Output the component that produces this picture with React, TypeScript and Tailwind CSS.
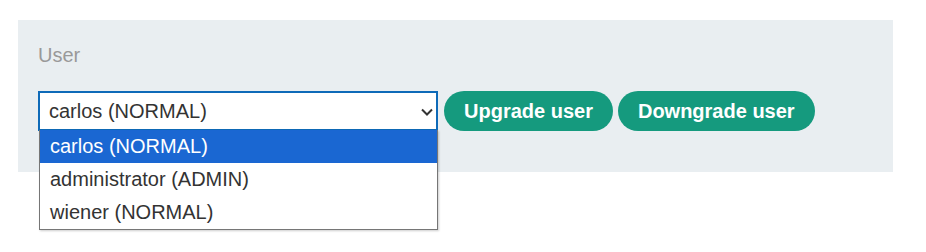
import React from "react";

export default function App() {
  const font = { fontFamily: '"Liberation Sans", Arial, sans-serif' };
  return (
    <div className="w-[926px] h-[252px] bg-white pt-5 pl-[18px]" style={font}>
      <div className="relative w-[875px] h-[152px] bg-[#e9eef1] pl-5 pt-6">
        <div className="text-[20px] leading-[23px] text-[#999999]">User</div>
        <div className="mt-6 flex items-center">
          <div className="relative w-[400px] h-[40px] bg-white border-2 border-[#0e6ab8] flex items-center pl-[9px] text-[20px] leading-[23px] text-[#333333]">
            <span>carlos (NORMAL)</span>
            <svg
              className="absolute right-[3px] top-[15px]"
              width="12"
              height="8"
              viewBox="0 0 12 8"
              fill="none"
            >
              <path d="M1 1.5 L6 6.5 L11 1.5" stroke="#333333" strokeWidth="2" />
            </svg>
          </div>
          <button className="ml-[6px] h-[40px] rounded-full bg-[#159a7e] px-5 text-[20px] font-bold text-white">
            Upgrade user
          </button>
          <button className="ml-[5px] h-[40px] rounded-full bg-[#159a7e] px-5 text-[20px] font-bold text-white">
            Downgrade user
          </button>
        </div>
        <div className="absolute left-[21px] top-[110px] w-[399px] bg-white border border-t-0 border-[#767676] shadow-[1px_1px_2px_rgba(0,0,0,0.2)] text-[20px] leading-[23px] text-[#333333]">
          <div className="h-[33px] bg-[#1a67d2] text-white pl-[10px] flex items-center">carlos (NORMAL)</div>
          <div className="h-[33px] pl-[10px] flex items-center">administrator (ADMIN)</div>
          <div className="h-[33px] pl-[10px] flex items-center">wiener (NORMAL)</div>
        </div>
      </div>
    </div>
  );
}
